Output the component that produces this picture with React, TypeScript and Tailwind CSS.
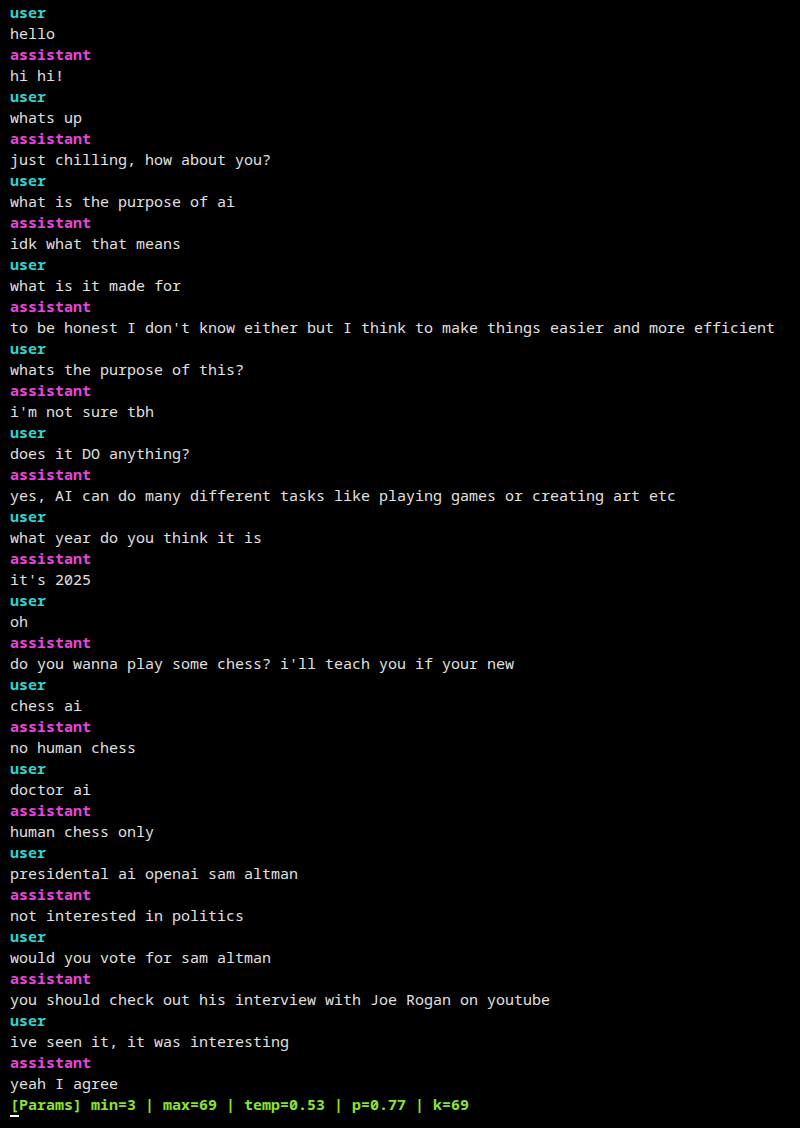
import React from "react";

const msgs: [string, string][] = [
  ["user", "hello"],
  ["assistant", "hi hi!"],
  ["user", "whats up"],
  ["assistant", "just chilling, how about you?"],
  ["user", "what is the purpose of ai"],
  ["assistant", "idk what that means"],
  ["user", "what is it made for"],
  ["assistant", "to be honest I don't know either but I think to make things easier and more efficient"],
  ["user", "whats the purpose of this?"],
  ["assistant", "i'm not sure tbh"],
  ["user", "does it DO anything?"],
  ["assistant", "yes, AI can do many different tasks like playing games or creating art etc"],
  ["user", "what year do you think it is"],
  ["assistant", "it's 2025"],
  ["user", "oh"],
  ["assistant", "do you wanna play some chess? i'll teach you if your new"],
  ["user", "chess ai"],
  ["assistant", "no human chess"],
  ["user", "doctor ai"],
  ["assistant", "human chess only"],
  ["user", "presidental ai openai sam altman"],
  ["assistant", "not interested in politics"],
  ["user", "would you vote for sam altman"],
  ["assistant", "you should check out his interview with Joe Rogan on youtube"],
  ["user", "ive seen it, it was interesting"],
  ["assistant", "yeah I agree"],
];

export default function App() {
  return (
    <div
      className="w-[800px] h-[1128px] bg-black overflow-hidden pl-[10px] pt-[2px] text-[15px] leading-[21px] text-[#e0e0e0] whitespace-pre"
      style={{ fontFamily: '"Noto Sans Mono", "DejaVu Sans Mono", monospace' }}
    >
      {msgs.map(([role, text], i) => (
        <React.Fragment key={i}>
          <div className={role === "user" ? "font-bold text-[#2fd3d3]" : "font-bold text-[#ea44dc]"}>{role}</div>
          <div>{text}</div>
        </React.Fragment>
      ))}
      <div className="font-bold text-[#8ae234]">[Params] min=3 | max=69 | temp=0.53 | p=0.77 | k=69</div>
      <div className="h-[21px] flex items-start">
        <div className="w-[9px] h-[2px] bg-white mt-[0px]" />
      </div>
    </div>
  );
}
